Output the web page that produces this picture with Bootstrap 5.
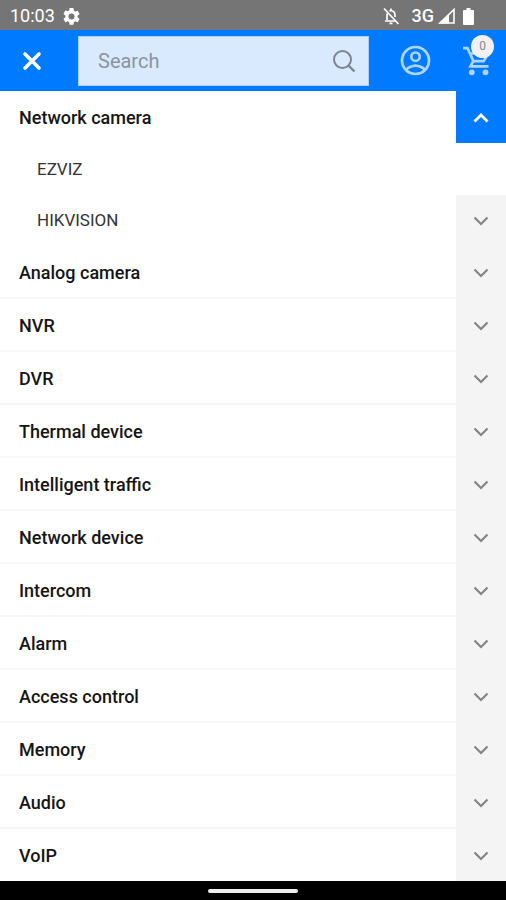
<!DOCTYPE html>
<html lang="en">
<head>
<meta charset="utf-8">
<meta name="viewport" content="width=device-width, initial-scale=1">
<title>Catalog menu</title>
<link href="https://cdn.jsdelivr.net/npm/bootstrap@5.3.0/dist/css/bootstrap.min.css" rel="stylesheet">
<style>
body { font-family: Roboto, "Liberation Sans", sans-serif; }
.status-bar { height: 30px; background: #757575; font-size: 18px; padding: 2px 32px 0 10px; }
.network-type { font-weight: 500; }
.top-bar { height: 61px; background: #007aff; }
.close-btn { width: 64px; height: 60px; }
.search-box { margin-left: 14px; height: 50px; background: #d9eaff; border: 1px solid #a9ceff; }
.search-box input { font-size: 20px; padding: 0 0 0 19px; color: #555; }
.search-box input::placeholder { color: #8b949e; opacity: 1; }
.search-box button { width: 48px; }
.account-link { margin-left: 31px; }
.cart-link { margin-left: 31px; padding-right: 14px; }
.cart-count { position: absolute; top: -11px; right: 12px; width: 23px; height: 23px; background: #f1f1f1; color: #888; font-size: 12px; }
.menu-row { height: 52px; }
.menu-row.ruled { height: 53px; }
.sub-menu { padding-top: 1px; }
.sub-row { height: 51px; }
.menu-row > a { padding-left: 19px; font-size: 18px; font-weight: 500; color: #151515; }
.menu-row.ruled > a { border-bottom: 2px solid #f7f7f7; padding-top: 2px; }
.sub-row > a { padding-left: 37px; font-size: 17px; color: #333; }
.toggle { width: 50px; background: #f4f4f4; color: #858585; }
.toggle.open { background: #007aff; color: #fff; }
.system-bar { min-height: 19px; background: #000; }
.home-handle { width: 90px; height: 4px; background: #eee; }
</style>
</head>
<body class="bg-white d-flex flex-column min-vh-100">
<svg class="d-none" aria-hidden="true">
  <symbol id="down" viewBox="0 0 16 10"><path d="M1.500 1.500 8 8l6.500-6.500" fill="none" stroke="currentColor" stroke-width="2.200"/></symbol>
  <symbol id="up" viewBox="0 0 16 10"><path d="M1.500 8.500 8 2l6.500 6.500" fill="none" stroke="currentColor" stroke-width="2.800"/></symbol>
</svg>

<div class="status-bar d-flex align-items-center text-white lh-1">
  <span>10:03</span>
  <svg class="ms-2" width="17" height="17" viewBox="2 2 20 20" fill="#fff"><path d="M19.140 12.940a7 7 0 0 0 0-1.880l2.030-1.580a.5.5 0 0 0 .12-.61l-1.920-3.320a.5.5 0 0 0-.59-.22l-2.390.96a7 7 0 0 0-1.620-.94l-.36-2.540A.5.5 0 0 0 13.930 2h-3.860a.5.5 0 0 0-.48.410l-.36 2.540a7 7 0 0 0-1.620.94l-2.390-.96a.5.5 0 0 0-.59.220L2.710 8.470a.5.5 0 0 0 .12.610l2.030 1.980a7 7 0 0 0 0 1.880l-2.030 1.580a.5.5 0 0 0-.12.610l1.920 3.320c.12.220.37.290.59.220l2.390-.96c.5.380 1.030.7 1.620.94l.36 2.540c.05.240.24.410.48.410h3.860c.24 0 .44-.17.480-.41l.36-2.540a7 7 0 0 0 1.620-.94l2.390.96c.22.080.47 0 .59-.22l1.920-3.320a.5.5 0 0 0-.12-.61zM12 15.600a3.600 3.600 0 1 1 0-7.200 3.600 3.600 0 0 1 0 7.200z"/></svg>
  <svg class="ms-auto" width="18" height="18" viewBox="0 0 18 18" fill="none" stroke="#fff" stroke-width="1.700"><path d="M2 1.500 16.500 17M3 14h10.500M5 13V8.500q0-1.800 1-3M7.500 3.900q5.500-1 5.500 4.600v1.500M9 1.500v2M7.500 16.300h3"/></svg>
  <span class="network-type ms-2 ps-1">3G</span>
  <svg class="ms-1" width="17" height="16" viewBox="0 0 17 16"><path d="M16 1.500V15H2z" fill="none" stroke="#fff" stroke-width="1.600"/><path d="M1 15.500 11 6v9.500z" fill="#fff"/></svg>
  <svg class="ms-2" width="11" height="17" viewBox="0 0 11 17" fill="#fff"><path d="M3.500 0h4v2H10q1 0 1 1v13q0 1-1 1H1q-1 0-1-1V3q0-1 1-1h2.500z"/></svg>
</div>

<header class="top-bar d-flex align-items-center">
  <button type="button" class="close-btn btn p-0 border-0 rounded-0 flex-shrink-0" aria-label="Close menu">
    <svg width="20" height="20" viewBox="0 0 20 20" stroke="#fff" stroke-width="3.600" stroke-linecap="round"><path d="m3 3 14 14M17 3 3 17"/></svg>
  </button>
  <form class="search-box d-flex flex-grow-1" role="search">
    <input type="text" class="form-control bg-transparent border-0 rounded-0 shadow-none" placeholder="Search" aria-label="Search">
    <button type="button" class="btn p-0 border-0 flex-shrink-0" aria-label="Search">
      <svg width="24" height="24" viewBox="0 0 24 24" fill="none" stroke="#7c858e" stroke-width="2"><circle cx="10.500" cy="10.500" r="8.500"/><path d="m16.500 16.500 6 6" stroke-width="2.400"/></svg>
    </button>
  </form>
  <a href="#" class="account-link d-flex flex-shrink-0" aria-label="Account">
    <svg width="31" height="31" viewBox="0 0 31 31" fill="none" stroke="#afd5ff" stroke-width="2.700"><circle cx="15.500" cy="15.500" r="13.500"/><circle cx="15.500" cy="11.700" r="4.200"/><path d="M6.500 25q0-1 1.500-2 3.500-2.300 7.500-2.300t7.500 2.300q1.500 1 1.500 2"/></svg>
  </a>
  <a href="#" class="cart-link position-relative d-flex flex-shrink-0 text-decoration-none" aria-label="Cart, 0 items">
    <svg width="30" height="30" viewBox="0 0 30 30" fill="none" stroke="#afd5ff" stroke-width="2.700"><path d="M1 2.200h4.500l6 13h10.200L27 6M7.500 7.500h17M11.300 15.200 8.500 20.300h18"/><circle cx="9.800" cy="26.300" r="2.900" fill="#afd5ff" stroke="none"/><circle cx="23.500" cy="26.300" r="2.900" fill="#afd5ff" stroke="none"/></svg>
    <span class="cart-count rounded-circle d-flex align-items-center justify-content-center">0</span>
  </a>
</header>

<nav aria-label="Categories">
  <ul class="list-unstyled mb-0" id="menu">
    <li>
      <div class="menu-row d-flex">
        <a href="#" class="flex-grow-1 d-flex align-items-center text-decoration-none">Network camera</a>
        <button type="button" class="toggle open btn p-0 border-0 rounded-0" aria-expanded="true" aria-label="Collapse Network camera"><svg width="16" height="10"><use href="#up"/></svg></button>
      </div>
      <ul class="sub-menu list-unstyled mb-0">
        <li class="sub-row d-flex"><a href="#" class="flex-grow-1 d-flex align-items-center text-decoration-none">EZVIZ</a></li>
        <li class="sub-row d-flex"><a href="#" class="flex-grow-1 d-flex align-items-center text-decoration-none">HIKVISION</a><button type="button" class="toggle btn p-0 border-0 rounded-0" aria-label="Expand HIKVISION"><svg width="16" height="10"><use href="#down"/></svg></button></li>
      </ul>
    </li>
    <li class="menu-row ruled d-flex"><a href="#" class="flex-grow-1 d-flex align-items-center text-decoration-none">Analog camera</a><button type="button" class="toggle btn p-0 border-0 rounded-0" aria-label="Expand Analog camera"><svg width="16" height="10"><use href="#down"/></svg></button></li>
    <li class="menu-row ruled d-flex"><a href="#" class="flex-grow-1 d-flex align-items-center text-decoration-none">NVR</a><button type="button" class="toggle btn p-0 border-0 rounded-0" aria-label="Expand NVR"><svg width="16" height="10"><use href="#down"/></svg></button></li>
    <li class="menu-row ruled d-flex"><a href="#" class="flex-grow-1 d-flex align-items-center text-decoration-none">DVR</a><button type="button" class="toggle btn p-0 border-0 rounded-0" aria-label="Expand DVR"><svg width="16" height="10"><use href="#down"/></svg></button></li>
    <li class="menu-row ruled d-flex"><a href="#" class="flex-grow-1 d-flex align-items-center text-decoration-none">Thermal device</a><button type="button" class="toggle btn p-0 border-0 rounded-0" aria-label="Expand Thermal device"><svg width="16" height="10"><use href="#down"/></svg></button></li>
    <li class="menu-row ruled d-flex"><a href="#" class="flex-grow-1 d-flex align-items-center text-decoration-none">Intelligent traffic</a><button type="button" class="toggle btn p-0 border-0 rounded-0" aria-label="Expand Intelligent traffic"><svg width="16" height="10"><use href="#down"/></svg></button></li>
    <li class="menu-row ruled d-flex"><a href="#" class="flex-grow-1 d-flex align-items-center text-decoration-none">Network device</a><button type="button" class="toggle btn p-0 border-0 rounded-0" aria-label="Expand Network device"><svg width="16" height="10"><use href="#down"/></svg></button></li>
    <li class="menu-row ruled d-flex"><a href="#" class="flex-grow-1 d-flex align-items-center text-decoration-none">Intercom</a><button type="button" class="toggle btn p-0 border-0 rounded-0" aria-label="Expand Intercom"><svg width="16" height="10"><use href="#down"/></svg></button></li>
    <li class="menu-row ruled d-flex"><a href="#" class="flex-grow-1 d-flex align-items-center text-decoration-none">Alarm</a><button type="button" class="toggle btn p-0 border-0 rounded-0" aria-label="Expand Alarm"><svg width="16" height="10"><use href="#down"/></svg></button></li>
    <li class="menu-row ruled d-flex"><a href="#" class="flex-grow-1 d-flex align-items-center text-decoration-none">Access control</a><button type="button" class="toggle btn p-0 border-0 rounded-0" aria-label="Expand Access control"><svg width="16" height="10"><use href="#down"/></svg></button></li>
    <li class="menu-row ruled d-flex"><a href="#" class="flex-grow-1 d-flex align-items-center text-decoration-none">Memory</a><button type="button" class="toggle btn p-0 border-0 rounded-0" aria-label="Expand Memory"><svg width="16" height="10"><use href="#down"/></svg></button></li>
    <li class="menu-row ruled d-flex"><a href="#" class="flex-grow-1 d-flex align-items-center text-decoration-none">Audio</a><button type="button" class="toggle btn p-0 border-0 rounded-0" aria-label="Expand Audio"><svg width="16" height="10"><use href="#down"/></svg></button></li>
    <li class="menu-row d-flex"><a href="#" class="flex-grow-1 d-flex align-items-center text-decoration-none">VoIP</a><button type="button" class="toggle btn p-0 border-0 rounded-0" aria-label="Expand VoIP"><svg width="16" height="10"><use href="#down"/></svg></button></li>
  </ul>
</nav>

<footer class="system-bar flex-grow-1 d-flex align-items-center justify-content-center">
  <div class="home-handle rounded-1"></div>
</footer>
<script src="https://cdn.jsdelivr.net/npm/bootstrap@5.3.0/dist/js/bootstrap.bundle.min.js"></script>
</body>
</html>
